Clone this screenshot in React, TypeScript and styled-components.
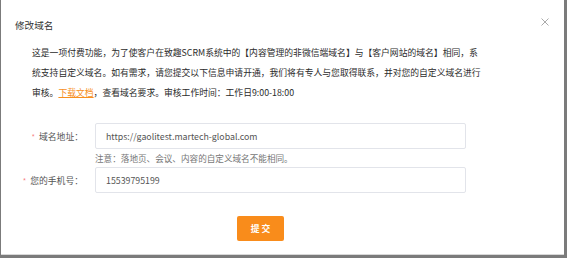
import React from "react";
import styled, { createGlobalStyle } from "styled-components";

const GlobalStyle = createGlobalStyle`
    html, body {
        margin: 0;
        padding: 0;
        background: #7b7b7b;
    }
    body {
        font-family: "Noto Sans CJK SC", "Noto Sans", "Liberation Sans", sans-serif;
        color: #333333;
    }
    * {
        box-sizing: border-box;
    }
`;

export default function App() {
    return (
        <>
            <GlobalStyle />
            <FrameStyled>
                <DialogStyled>
                    <HeaderStyled>
                        <TitleStyled>修改域名</TitleStyled>
                        <CloseStyled aria-label="close">
                            <svg width="8" height="8" viewBox="0 0 8 8">
                                <path d="M0.5 0.5 L7.5 7.5 M7.5 0.5 L0.5 7.5" stroke="#a0a0a0" strokeWidth="0.9" />
                            </svg>
                        </CloseStyled>
                    </HeaderStyled>
                    <DescStyled>
                        这是一项付费功能，为了使客户在致趣SCRM系统中的【内容管理的非微信端域名】与【客户网站的域名】相同，系统支持自定义域名。如有需求，请您提交以下信息申请开通，我们将有专人与您取得联系，并对您的自定义域名进行审核。<LinkStyled>下载文档</LinkStyled>，查看域名要求。审核工作时间：工作日9:00-18:00
                    </DescStyled>
                    <FormStyled>
                        <RowStyled>
                            <LabelStyled>
                                <StarStyled>*</StarStyled>域名地址：
                            </LabelStyled>
                            <FieldStyled>
                                <InputStyled defaultValue="https://gaolitest.martech-global.com" />
                                <HintStyled>注意：落地页、会议、内容的自定义域名不能相同。</HintStyled>
                            </FieldStyled>
                        </RowStyled>
                        <RowStyled $gap={3}>
                            <LabelStyled>
                                <StarStyled>*</StarStyled>您的手机号：
                            </LabelStyled>
                            <FieldStyled>
                                <InputStyled defaultValue="15539795199" />
                            </FieldStyled>
                        </RowStyled>
                    </FormStyled>
                    <FooterStyled>
                        <SubmitStyled>提 交</SubmitStyled>
                    </FooterStyled>
                </DialogStyled>
            </FrameStyled>
        </>
    );
}

const FrameStyled = styled.div`
    width: 567px;
    height: 258px;
    padding-left: 1px;
    background: #7b7b7b;
`;

const DialogStyled = styled.div`
    width: 563px;
    height: 255px;
    background: #ffffff;
    border-bottom: 1px solid #d8d8d8;
    display: flex;
    flex-direction: column;
`;

const HeaderStyled = styled.div`
    display: flex;
    justify-content: space-between;
    align-items: flex-start;
    padding: 18px 15px 0 14px;
    height: 43px;
`;

const TitleStyled = styled.h3`
    margin: 0;
    font-size: 9.6px;
    line-height: 14px;
    font-weight: 400;
    color: #333333;
`;

const CloseStyled = styled.span`
    display: flex;
    margin-top: 0;
`;

const DescStyled = styled.p`
    margin: 0 0 0 31px;
    width: 454px;
    font-size: 8.8px;
    line-height: 20px;
    color: #2b2b2b;
`;

const LinkStyled = styled.a`
    color: #f7901e;
    text-decoration: underline;
    cursor: pointer;
`;

const FormStyled = styled.div`
    margin-top: 20px;
    display: flex;
    flex-direction: column;
`;

const RowStyled = styled.div<{ $gap?: number }>`
    display: flex;
    align-items: flex-start;
    gap: 12px;
    margin-top: ${(p) => p.$gap ?? 0}px;
`;

const LabelStyled = styled.label`
    width: 82px;
    height: 26px;
    display: flex;
    align-items: center;
    justify-content: flex-end;
    font-size: 8.8px;
    color: #555555;
`;

const StarStyled = styled.span`
    color: #f78080;
    font-size: 7.5px;
    margin-right: 4px;
`;

const FieldStyled = styled.div`
    display: flex;
    flex-direction: column;
`;

const InputStyled = styled.input`
    width: 371px;
    height: 26px;
    border: 1px solid #e2e4ea;
    border-radius: 2px;
    padding: 0 10px;
    font-family: inherit;
    font-size: 8.8px;
    color: #555555;
    outline: none;
`;

const HintStyled = styled.div`
    margin-top: 3px;
    font-size: 8.6px;
    line-height: 12px;
    color: #777777;
`;

const FooterStyled = styled.div`
    margin-top: 23px;
    padding-left: 236px;
    display: flex;
`;

const SubmitStyled = styled.button`
    width: 47px;
    height: 25px;
    border: none;
    border-radius: 2px;
    background: #f98c1b;
    color: #ffffff;
    font-family: inherit;
    font-size: 8.8px;
    font-weight: 700;
    cursor: pointer;
`;
